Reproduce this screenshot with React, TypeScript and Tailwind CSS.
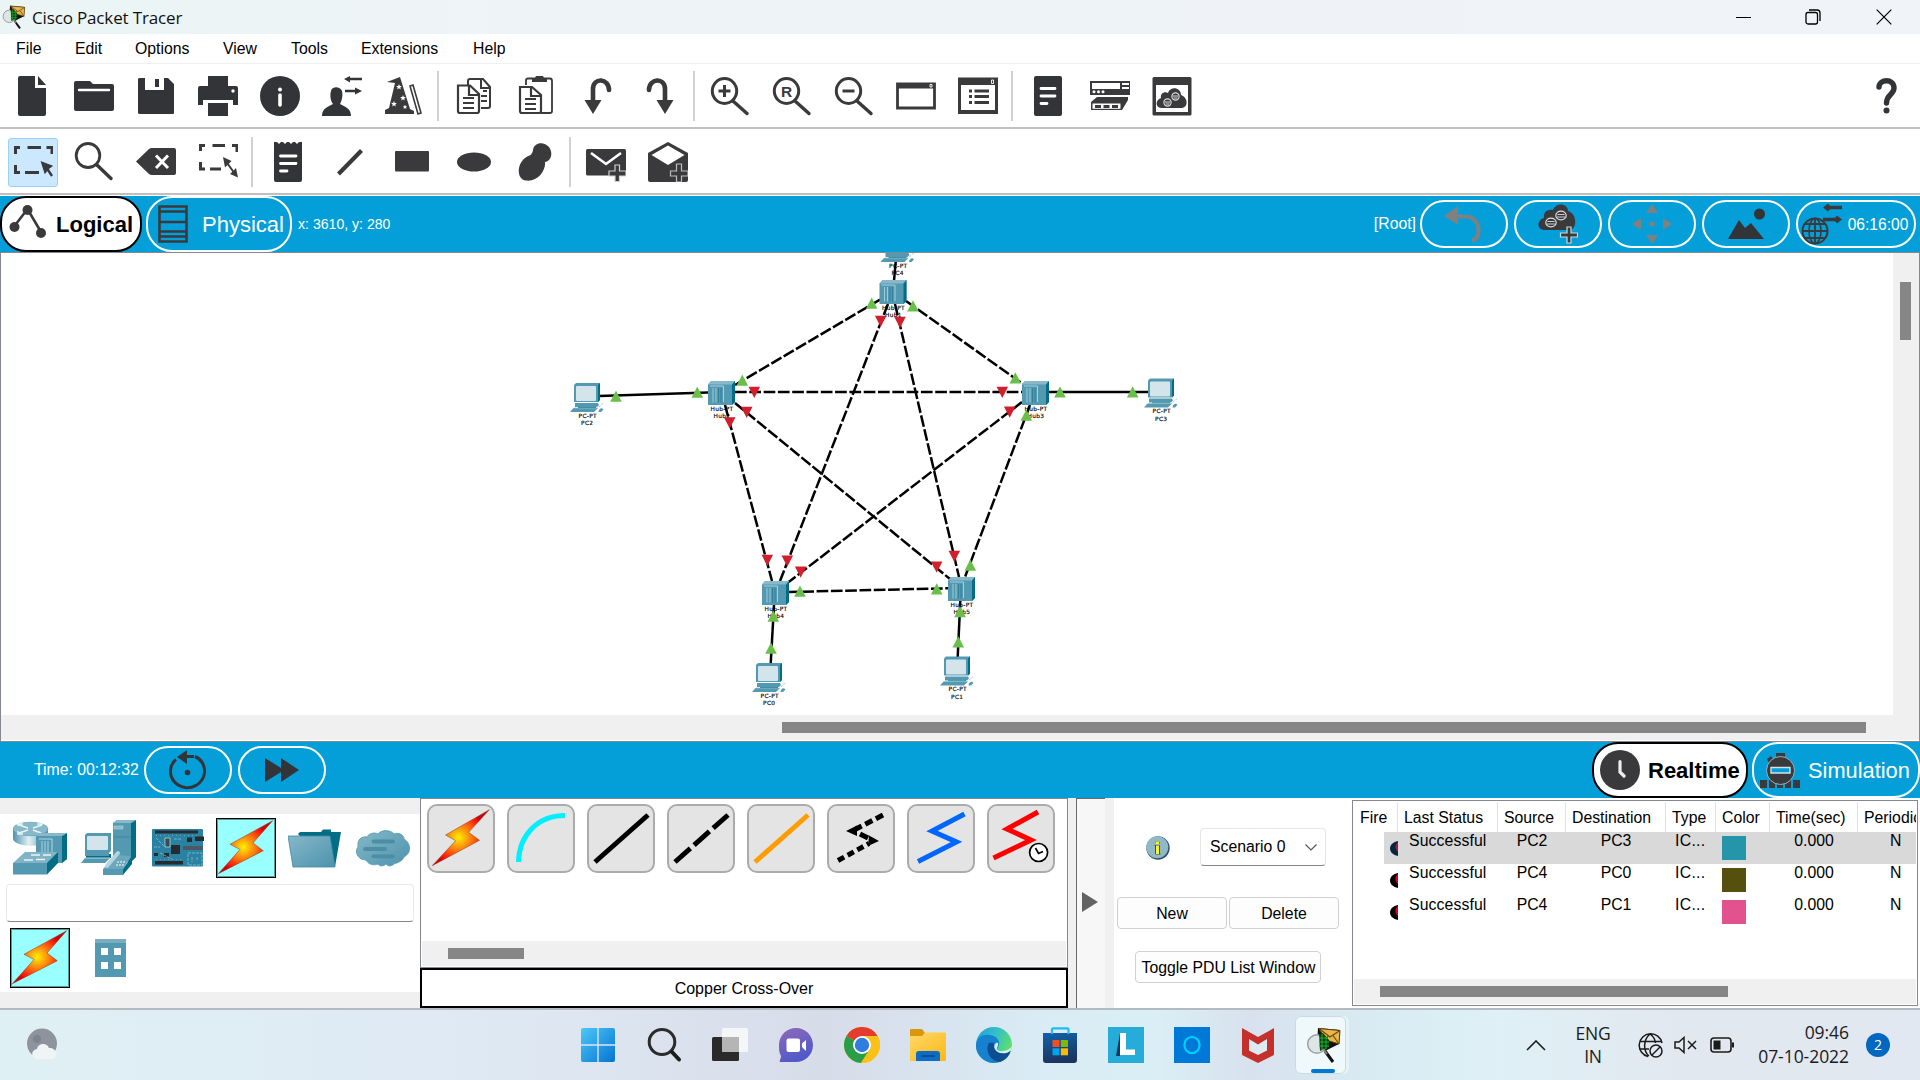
import React from "react";

type Pt = [number, number];

const D = "#333438";
const G = "#3a3a3c";
const BLUE = "#049fd9";

/* ---------- generic ---------- */

function Ico({ children, size = 40, className = "" }: { children: React.ReactNode; size?: number; className?: string }) {
  return (
    <svg width={size} height={size} viewBox={`0 0 ${size} ${size}`} className={`block shrink-0 ${className}`} fill="none">
      {children}
    </svg>
  );
}

function ToolCell({ children }: { children: React.ReactNode }) {
  return <div className="flex w-[62px] shrink-0 items-center justify-center">{children}</div>;
}

function Sep() {
  return (
    <div className="flex w-2 shrink-0 justify-start self-center pl-[2px]">
      <div className="h-[50px] w-0.5 bg-[#d0d0d0]" />
    </div>
  );
}

function PacketTracerLogo({ w, h }: { w: number; h: number }) {
  return (
    <svg width={w} height={h} viewBox="0 0 34 36" className="block shrink-0" fill="none">
      <path d="M11 1 L33 3 L32 17 L18 24 L10 18z" fill="#111" />
      <path d="M12 1.500 L33 3.500 L32 17 L19 13z" fill="#e8b64c" stroke="#5a3d08" strokeWidth="1" />
      <path d="M12 1.500 L23 10 L33 3.500 M19 13 L21 9 M32 17 L26 8.500" stroke="#6b4a10" strokeWidth="1.200" />
      <circle cx="10" cy="17" r="9.300" fill="#dfe5e4" stroke="#9aa3a3" strokeWidth="1.500" />
      <path d="M12 7 L16 6 L22 13 V20 L13 24z" fill="#0b3d12" />
      <path d="M12 11 h9 M12 15 h10 M12 19 h10 M15 7 v16 M19 10 v12" stroke="#17b52c" strokeWidth="1" />
      <path d="M18 24 L26 35" stroke="#111" strokeWidth="3" />
      <path d="M16 22 L20 27" stroke="#888" strokeWidth="2" />
    </svg>
  );
}

/* ---------- toolbar icons ---------- */

const Magnifier = ({ children }: { children?: React.ReactNode }) => (
  <Ico>
    <ellipse cx="14.5" cy="15" rx="12.2" ry="12.4" stroke={G} strokeWidth="3" />
    <path d="M23 25 L37 37.5" stroke={G} strokeWidth="3.4" strokeLinecap="round" />
    {children}
  </Ico>
);

const Star = ({ x, y, r }: { x: number; y: number; r: number }) => (
  <path
    transform={`translate(${x} ${y}) scale(${r})`}
    d="M0 -1 L0.270 -0.360 L0.950 -0.310 L0.430 0.140 L0.590 0.810 L0 0.450 L-0.590 0.810 L-0.430 0.140 L-0.950 -0.310 L-0.270 -0.360z"
    fill="#fff"
  />
);

const mainTools: (React.ReactNode | null)[] = [
  <Ico><path d="M8 0 H23 V12 H34 V38 Q34 40 32 40 H8 Q6 40 6 38 V2 Q6 0 8 0z M26 0 L34 9 H26z" fill={D} /></Ico>,
  <Ico><path d="M0 7 Q0 5 2 5 H16 L19 8 H38 Q40 8 40 10 V33 Q40 35 38 35 H2 Q0 35 0 33z" fill={D} /><path d="M5 14 H35" stroke="#fff" strokeWidth="2.4" strokeLinecap="round" /></Ico>,
  <Ico><path d="M4 2 H9 V14 H28 V2 H32 L38 8 V37 Q38 38 37 38 H4 Q2 38 2 37 V3 Q2 2 4 2z" fill={D} /><path d="M19 3 H23 V11 H19z" fill={D} /></Ico>,
  <Ico><path d="M10 0 H30 V10 H38 Q40 10 40 12 V29 H35 V24 H5 V29 H0 V12 Q0 10 2 10 H10z M10 27 H30 V40 H10z" fill={D} /><circle cx="35" cy="15" r="1.7" fill="#fff" /></Ico>,
  <Ico><circle cx="20" cy="20" r="20" fill={D} /><circle cx="20" cy="13.5" r="2" fill="#fff" /><path d="M20 19 V29" stroke="#fff" strokeWidth="3.6" strokeLinecap="round" /></Ico>,
  <Ico><path d="M0 40 C0 32 6 31 11 28 C8 24 8 18 9 15 C10 10 18 10 20 15 C21 19 20 25 18 28 C23 31 29 32 29 40z" fill={D} /><path d="M25 3 H40 M23 15 H37" stroke={D} strokeWidth="2.6" /><path d="M22 3 L28 0 V6.500z M40 15 L33 11.500 V18.500z" fill={D} /></Ico>,
  <Ico><path d="M3 6 L16 1 L26 33 L30 35 V38 H1 V34 L5 32 L11 7z" fill={G} /><Star x={15} y={11} r={3} /><Star x={19} y={22} r={3} /><Star x={10} y={28} r={3} /><Star x={21} y={31} r={2.400} /><path d="M26 10 L29 9 L37 37 L34 38z" stroke={G} strokeWidth="1.600" fill="#fff" /></Ico>,
  null,
  <Ico><path d="M14 12 V5 Q14 3 16 3 H29 L36 11 V30 Q36 32 34 32 H27 M27 3 V12 H36 M27 20 H33 M27 25 H33 M29 15 H33" stroke={G} strokeWidth="2" /><path d="M4 9.500 H16 L25 18 V35 Q25 37 23 37 H6 Q4 37 4 35z" fill="#fff" stroke={G} strokeWidth="2.2" /><path d="M15 9 V19 H25 M9 22 H20 M9 27 H20 M9 32 H20" stroke={G} strokeWidth="2.2" /></Ico>,
  <Ico><path d="M10 9 V4 Q10 2.500 12 2.500 H34 Q36 2.500 36 5 V35 Q36 37 34 37 H25" stroke={G} strokeWidth="1.8" /><path d="M16 2 H19 L20 0 H27 L28 2 H31 V6 H16z" fill={G} /><path d="M4 11 H16 L25 19 V35 Q25 37 23 37 H6 Q4 37 4 35z" fill="#fff" stroke={G} strokeWidth="2.2" /><path d="M15 11 V20 H25 M9 23 H20 M9 28 H20 M9 33 H20" stroke={G} strokeWidth="2.200" /></Ico>,
  <Ico><path d="M31 14 C31 2 15 1 15 13 V26" stroke={G} strokeWidth="4.600" strokeLinecap="round" /><path d="M6.500 24 H23.500 L15 38z" fill={G} /></Ico>,
  <Ico><path d="M9 14 C9 2 25 1 25 13 V26" stroke={G} strokeWidth="4.600" strokeLinecap="round" /><path d="M16.500 24 H33.500 L25 38z" fill={G} /></Ico>,
  null,
  <Magnifier><path d="M14.500 9 V21 M8.500 15 H20.500" stroke={G} strokeWidth="3" /></Magnifier>,
  <Magnifier><text x="14.500" y="20.600" textAnchor="middle" fontSize="15.500" fontWeight="700" fontFamily="Liberation Sans, sans-serif" fill={G}>R</text></Magnifier>,
  <Magnifier><path d="M8.500 15 H20.500" stroke={G} strokeWidth="3" /></Magnifier>,
  <Ico><path d="M1.500 8 H38.500 V32 H1.500z" stroke={G} strokeWidth="2.800" /><path d="M1 7 H39 V12.500 H1z" fill={G} /><path d="M34 8.500 H36 V11 H34z" stroke="#fff" strokeWidth="0.900" /></Ico>,
  <Ico><path d="M1.500 3 H38.500 V36.500 H1.500z" stroke={G} strokeWidth="3" /><path d="M1 2 H39 V9 H1z M1 34 H39 V37.500 H1z" fill={G} /><path d="M33.500 4 H35.500 V7.500 H33.500z" stroke="#fff" strokeWidth="0.900" /><path d="M11 15 H14 M11 20.500 H14 M11 26.500 H14 M16.500 15 H31 M16.500 20.500 H31 M16.500 26.500 H31" stroke={G} strokeWidth="2.800" /></Ico>,
  null,
  <Ico><rect x="6" width="28" height="40" rx="2" fill={D} /><path d="M13 12.500 H27 M13 20 H27 M13 27.500 H19" stroke="#fff" strokeWidth="2.800" strokeLinecap="round" /></Ico>,
  <Ico><path d="M0 5 H40 V19 H0z" fill={G} /><path d="M2 7 H30 V13 H2z M32 7 H39 V9 H32z M32 11 H39 V13 H32z" fill="#fff" /><g fill="#fff"><circle cx="4" cy="15.800" r="1.500" /><circle cx="8.500" cy="15.800" r="1.500" /><circle cx="13" cy="15.800" r="1.500" /></g><path d="M7 21 H38 V24 L32 34 H1 V26z" fill={G} /><path d="M2.500 27.500 H30.500 V32.800 H2.500z" fill="#fff" /><path d="M5 29 H11 V32 H5z M13.500 29 H19.500 V32 H13.500z M22 29 H28 V32 H22z" fill={G} /></Ico>,
  <Ico><rect x="0.500" y="1" width="39" height="38.500" rx="1.500" fill={G} /><path d="M4 9 H36 V36 H4z" fill="#fff" /><path d="M10 32 C3 32 3 24 9 22 C8 17 13 15 16 17 C18 10 29 11 29 19 C36 21 37 32 29 32z" fill={G} /><circle cx="15.500" cy="26.500" r="3.600" stroke="#ddd" strokeWidth="1.200" /><circle cx="23.500" cy="20.500" r="3.600" stroke="#ddd" strokeWidth="1.200" /><path d="M13 26 H18 M13.500 28 H17.500 M21 20 H26 M21.500 22 H25.500" stroke="#ddd" strokeWidth="1" /></Ico>,
];

const selectPath = "M2.500 12 V5.500 H7 M14.500 5.500 H28 M33.500 5.500 H39 V12 M2.500 23 V30.500 H7 M12 30.500 H26";

const drawTools: (React.ReactNode | null)[] = [
  <Ico><path d={selectPath} stroke={G} strokeWidth="3" /><path d="M28.500 20 L39 24 L35.500 26.500 L32 31z" fill={G} stroke={G} strokeWidth="1.200" /><path d="M33 25 L39 34" stroke={G} strokeWidth="2.400" /></Ico>,
  <Ico><ellipse cx="14" cy="13.500" rx="11.800" ry="12" stroke={G} strokeWidth="2.800" /><path d="M23 23 L37 36.500" stroke={G} strokeWidth="3.400" strokeLinecap="round" /></Ico>,
  <Ico><path d="M0 19.500 L13 7 Q14 6 16 6 H38 Q40 6 40 8 V31 Q40 33 38 33 H16 Q14 33 13 32z" fill={G} /><path d="M20 13.500 L32 26 M32 13.500 L20 26" stroke="#fff" strokeWidth="3" /></Ico>,
  <Ico><path d="M2.500 9 V3.500 H7 M14.500 3.500 H27 M34 3.500 H39 V10 M2.500 20 V27 H7 M12 27 H23" stroke={G} strokeWidth="3" /><path d="M27 18 L37 32" stroke={G} strokeWidth="2" /><path d="M25 15 L33.500 19 L27 25.500z M40 35.500 L32 32 L38 26z" fill={G} /></Ico>,
  null,
  <Ico><path d="M6 0 H9 L11 2 L13 0 H15 L17 2 L19 0 H21 L23 2 L25 0 H27 L29 2 L31 0 H34 V38 Q34 40 32 40 H8 Q6 40 6 38z" fill={D} /><path d="M12.500 14 H28 M12.500 21.500 H28 M12.500 29 H19" stroke="#fff" strokeWidth="2.800" strokeLinecap="round" /></Ico>,
  <Ico><path d="M8.500 32 L31.500 8.500" stroke={G} strokeWidth="4.200" /></Ico>,
  <Ico><rect x="3" y="9" width="34" height="20.500" rx="1" fill={G} /></Ico>,
  <Ico><ellipse cx="20" cy="20" rx="17" ry="9.600" fill={G} /></Ico>,
  <Ico><path d="M17 8 C18 0 28 -1 33 5 C38 12 34 20 29 20 C30 28 22 40 10 38.500 C0 37 1 22 9 16 C13 13 16 14 17 8z" fill={G} /></Ico>,
  null,
  <Ico><rect y="7" width="40" height="26.500" rx="1.500" fill={G} /><path d="M5 11 L20 22 L35 11" stroke="#fff" strokeWidth="2.600" /><path d="M29 23 H33.500 V29 H40 V34 H33.500 V39.500 H29 V34 H23 V29 H29z" fill={G} stroke="#cfcfcf" strokeWidth="1.200" /></Ico>,
  <Ico><path d="M0 11 L20 0 L40 11 V38 Q40 40 38 40 H2 Q0 40 0 38z" fill={G} /><path d="M3.500 13 L20 3.500 L36.500 13 L20 23z" fill="#fff" /><path d="M28.500 22 H33.500 V29 H40 V34 H33.500 V40 H28.500 V34 H22.500 V29 H28.500z" fill={G} stroke="#bdbdbd" strokeWidth="1.200" /></Ico>,
];

/* ---------- topology ---------- */

type Link = { a: Pt; b: Pt; dashed?: boolean };

const links: Link[] = [
  { a: [880, 299.6], b: [735, 385], dashed: true },
  { a: [906, 301], b: [1023, 384], dashed: true },
  { a: [735, 392], b: [1022, 392], dashed: true },
  { a: [888, 304], b: [780, 581], dashed: true },
  { a: [895, 304], b: [959, 577], dashed: true },
  { a: [725, 405], b: [772, 581], dashed: true },
  { a: [735, 403], b: [950, 579], dashed: true },
  { a: [1022, 402], b: [788.7, 582], dashed: true },
  { a: [1030, 405], b: [965, 577], dashed: true },
  { a: [788, 592], b: [948, 588.3], dashed: true },
  { a: [599, 396], b: [708, 392.5] },
  { a: [1049, 392], b: [1150, 392] },
  { a: [895.7, 262], b: [894, 281] },
  { a: [774, 605], b: [770.7, 664] },
  { a: [960.3, 601], b: [957.7, 657] },
];

const ups: Pt[] = [
  [616, 391], [697.3, 387], [742.3, 375], [871.7, 298], [913, 300.7], [1015.3, 372.7], [1060, 386.7], [1132.7, 386.7],
  [1026.3, 410], [970.3, 560], [936.7, 583.7], [800, 586], [773.3, 611], [771, 643], [960, 606.5], [958.3, 636.7],
];
const downs: Pt[] = [
  [754.3, 387], [746.7, 407], [729.7, 417.5], [880.7, 316], [900, 317], [1002.3, 387], [1009.7, 406.7],
  [767.3, 555], [787.3, 555.7], [800.7, 566.7], [954.3, 551], [936.7, 561.7],
];

const hubs: { at: Pt; name: string }[] = [
  { at: [708, 381], name: "Hub2" },
  { at: [879.5, 280], name: "Hub1" },
  { at: [1022, 381], name: "Hub3" },
  { at: [762, 581], name: "Hub4" },
  { at: [948, 577], name: "Hub5" },
];
const pcs: { at: Pt; name: string }[] = [
  { at: [570, 383], name: "PC2" },
  { at: [1144, 378.5], name: "PC3" },
  { at: [880.5, 233], name: "PC4" },
  { at: [752, 663], name: "PC0" },
  { at: [940, 656.5], name: "PC1" },
];

function HubGlyph() {
  return (
    <g>
      <path d="M0 3.500 L3 0 H27 V21 L24 24 H0z" fill="#5399b2" />
      <path d="M0 3.500 L3 0 H27 L24 3.500z" fill="#88b9ca" />
      <path d="M24 3.500 L27 0 V21 L24 24z" fill="#046d86" />
      <path d="M2 5 H15.500 V21" stroke="#a8cfdc" strokeWidth="1" fill="none" />
      <path d="M5 7 V21.500 M8 7 V21.500" stroke="#a8cfdc" strokeWidth="0.900" />
      <path d="M10.500 7 V21.500 M13 7 V21.500" stroke="#2f7c96" strokeWidth="0.900" />
    </g>
  );
}

function PcGlyph() {
  return (
    <g>
      <path d="M4 2 L6 0 H30 V17 L28 19 H4z" fill="#5399b2" />
      <path d="M28 2 L30 0 V17 L28 19z" fill="#046d86" />
      <rect x="6" y="3" width="20" height="15" rx="1" fill="#d3e4ea" />
      <path d="M5 20 H28 L29 22 L27 24 H5z" fill="#5399b2" />
      <path d="M8 24 H26 V25.500 H8z" fill="#046d86" />
      <path d="M3.500 25 H28 L24 29 H0z" fill="#5399b2" />
      <path d="M4 25 H28" stroke="#9cc5d3" strokeWidth="0.800" />
      <path d="M29 27 Q31 24 33.500 26.500 L31 29 H28.500z" fill="#5399b2" />
      <path d="M29 24 Q32 19.500 34.500 21" stroke="#8fbccb" strokeWidth="0.800" strokeDasharray="2 1.500" fill="none" />
    </g>
  );
}

function Topology() {
  return (
    <svg width="1892" height="462" viewBox="1 253 1892 462" className="block">
      <g fontFamily="DejaVu Sans, sans-serif" fontSize="5.800" letterSpacing="0.350" textAnchor="middle" fill="#000" stroke="#000" strokeWidth="0.150">
        {hubs.map(({ at: [x, y], name }) => (
          <g key={name}>
            <text x={x + 14} y={y + 30}>Hub-PT</text>
            <text x={x + 14} y={y + 36.700}>{name}</text>
          </g>
        ))}
        {pcs.map(({ at: [x, y], name }) => (
          <g key={name}>
            <text x={x + 17.800} y={y + 34.800}>PC-PT</text>
            <text x={x + 17.200} y={y + 42}>{name}</text>
          </g>
        ))}
      </g>
      <g stroke="#000" strokeWidth="2.500">
        {links.map((l, i) => (
          <line key={i} x1={l.a[0]} y1={l.a[1]} x2={l.b[0]} y2={l.b[1]} strokeDasharray={l.dashed ? "11.7 2.6" : undefined} />
        ))}
      </g>
      {hubs.map(({ at: [x, y], name }) => (
        <g key={name} transform={`translate(${x} ${y})`}><HubGlyph /></g>
      ))}
      {pcs.map(({ at: [x, y], name }) => (
        <g key={name} transform={`translate(${x} ${y})`}><PcGlyph /></g>
      ))}
      {ups.map(([x, y], i) => <path key={i} d={`M${x} ${y - 0.500} l5.800 11.300 h-11.600z`} fill="#6abf4b" />)}
      {downs.map(([x, y], i) => <path key={i} d={`M${x} ${y + 11} l5.800 -11.300 h-11.600z`} fill="#d0202e" />)}
    </svg>
  );
}

/* ---------- device palette ---------- */

function Bolt({ d }: { d: string }) {
  return <path d={d} fill="url(#bolt)" stroke="#7a3c1a" strokeWidth="0.500" />;
}

function BoltTile() {
  return (
    <div className="h-[60px] w-[60px] border border-black bg-[#99ffff]">
      <svg width="58" height="58" viewBox="1 1 58 58" className="block">
        <path d="M1.500 1.500 H58.500 V58.500 H1.500z" fill="none" stroke="#3b6f6f" strokeWidth="0.700" />
        <Bolt d="M56.700 2.700 L14 26.300 L24 31.500 L2.300 55.700 L47.300 32.700 L37 25z" />
      </svg>
    </div>
  );
}

const NetworkIcon = () => (
  <Ico size={54}>
    <path d="M0 8 V18 C2 27 33 27 35 18 V8z" fill="url(#steel)" />
    <ellipse cx="17.500" cy="8" rx="17.500" ry="6.800" fill="#88b9ca" stroke="#5399b2" strokeWidth="0.600" />
    <path d="M6 4 L15 7 M10 3 H5 V5 M29 4 L20 7 M24 3 H30 M6 12 L15 9 M5 10 V13 H10 M28 12 L20 9" stroke="#e9f3f6" strokeWidth="1.500" />
    <path d="M23 15 L27 12 H54 V38 L49 42 H23z" fill="#5399b2" /><path d="M49 15 L54 12 V38 L49 42z" fill="#046d86" />
    <path d="M23 15 L27 12 H54 L49 15z" fill="#88b9ca" />
    <path d="M26 18 H39 V31 M29 20 V32 M32 20 V32 M35 20 V32" stroke="#b4d4df" strokeWidth="1" />
    <path d="M0 42 L12 31 H45 L34 42z" fill="#7fb3c5" /><path d="M0 42 H34 V53.500 H0z" fill="#5399b2" /><path d="M34 42 L45 31 V42 L34 53.500z" fill="#046d86" />
    <path d="M18 34 H27 M30 34 H38 M11 39 H20 M23 38.500 H32" stroke="#e9f3f6" strokeWidth="1.400" />
  </Ico>
);

const EndDevicesIcon = () => (
  <Ico size={56}>
    <path d="M32 3 L36 0 H55 V37 L50 42 H32z" fill="#5399b2" /><path d="M50 3 L55 0 V37 L50 42z" fill="#046d86" /><path d="M32 3 L36 0 H55 L50 3z" fill="#88b9ca" />
    <path d="M33 6 H42 V9 H33z" fill="#88b9ca" stroke="#b4d4df" strokeWidth="0.600" /><path d="M32 17 H50" stroke="#3f8299" strokeWidth="0.800" />
    <path d="M4 15 L6 13 H30 V31 L28 33 H4z" fill="#5399b2" /><rect x="6" y="16" width="21" height="14" rx="1" fill="#d3e4ea" />
    <path d="M5 34 H30 V38 H5z" fill="#046d86" /><path d="M4 33 H28 V36 H4z" fill="#5399b2" /><path d="M4 38 H29 L24 43 H0z" fill="#5399b2" /><path d="M4 38 H29" stroke="#b4d4df" />
    <path d="M22 49 L35 35 L50 36 L42 49z" fill="#6ba8bd" /><path d="M22 49 H42 V55 H22z" fill="#5399b2" /><path d="M42 49 L51 36 V44 L42 55z" fill="#046d86" />
    <path d="M26 46 L37 33" stroke="#b4d4df" strokeWidth="4" strokeLinecap="round" /><path d="M36 42 H45 M35 45 H43" stroke="#c9e0e8" strokeWidth="1.500" strokeDasharray="2 1" />
  </Ico>
);

const BoardIcon = () => (
  <svg width="52" height="38" viewBox="0 0 52 38" className="ml-[2px] block">
    <rect width="51" height="37.500" rx="1" fill="#2a81a1" />
    <path d="M3 1.500 H46 V4.500 H3z M3 32 H31 V35.500 H3z M19 16 H28 V25 H19z M35 8.500 H40 V13 H35z M43 7.500 H52 V12 H43z M2 24 H6 V27 H2z M12 24 H17 V28 H12z" fill="#262b30" />
    <path d="M31 17 H51 V21 H31z" fill="#4c5960" />
    <path d="M13 9 H18 V18 H13z" fill="#3d4a50" stroke="#cfe" strokeWidth="0.600" />
    <path d="M4 9 L13 18 M22 10 H30 M2 18 H8 M8 24 L20 30 M36 24 H50 V36 H36z M40 28 V33 M45 28 V32" stroke="#8cc9df" strokeWidth="0.700" fill="none" strokeDasharray="3 1" />
    <path d="M4 6.500 H46 M4 30.500 H31" stroke="#7cc3dc" strokeWidth="0.600" strokeDasharray="1 3" />
  </svg>
);

const FolderIcon = () => (
  <svg width="54" height="39" viewBox="0 0 54 39" className="ml-[2px] block">
    <path d="M10 5 L12 3 H33 L35 0.500 H43 V3 H53 L47 38 H40z" fill="#046d86" />
    <path d="M0 7 H42 L47 38 H5z" fill="url(#steelDiag)" stroke="#3f8ba5" strokeWidth="0.800" />
  </svg>
);

const CloudIcon = () => (
  <svg width="54" height="37" viewBox="0 0 54 37" className="block">
    <path d="M10 30 C2 30 -2 22 2 17 C1 10 5 6 11 7 C13 3 19 2 22 4 C26 -1 35 0 38 4 C43 2 48 5 48 9 C55 13 56 23 48 27 C46 32 40 33 38 34 C35 37 31 36 30 34 C27 37 23 36 22 34 C17 36 12 34 10 30z" fill="url(#steelDiag)" stroke="#5399b2" strokeWidth="0.800" />
    <path d="M17.500 11.500 H37 M9 19 H29 M17.500 26.300 H37" stroke="#4d8ea6" strokeWidth="3.800" strokeLinecap="round" />
  </svg>
);

function Palette() {
  return (
    <div className="flex h-[210px] w-[420px] shrink-0 flex-col bg-[#f0f0f0] py-4">
      <div className="flex h-[178px] flex-col bg-white">
        <div className="flex h-[70px] pt-1 pl-[6px]">
          {[<NetworkIcon />, <EndDevicesIcon />, <BoardIcon />, <BoltTile />, <FolderIcon />, <CloudIcon />].map((el, i) => (
            <div key={i} className="flex h-[60px] w-[68.5px] items-center justify-center">{el}</div>
          ))}
        </div>
        <div className="mx-[6px] h-[38px] rounded-sm border border-[#e8e8e8] border-b-[#868686] bg-white" />
        <div className="flex items-center pt-[6px] pl-[10px]">
          <BoltTile />
          <svg width="31" height="38" viewBox="0 0 31 38" className="ml-[25px] block">
            <rect width="31" height="38" fill="#5399b2" />
            <path d="M0 0 H31 V4 H0z" fill="#79aec1" />
            <path d="M6 9 H13 V16 H6z M19 9 H26 V16 H19z M6 23 H13 V30 H6z M19 23 H26 V30 H19z" fill="#fff" />
          </svg>
        </div>
      </div>
    </div>
  );
}

const cables: React.ReactNode[] = [
  <Bolt d="M62.400 5.700 L18.600 31 L28.600 36.700 L5.200 61.700 L52.500 36.300 L41.600 28.300z" />,
  <path d="M11.500 58 C12 32 30 11.500 58 11.500" stroke="#00f0ff" strokeWidth="5" />,
  <path d="M8 58 L61 11" stroke="#000" strokeWidth="5" />,
  <path d="M8 58 L61 11" stroke="#000" strokeWidth="5" strokeDasharray="20.500 5" />,
  <path d="M8 58 L61 11" stroke="#ff9c00" strokeWidth="5" />,
  <><path d="M56 11 L28 25.500" stroke="#000" strokeWidth="5" strokeDasharray="8 4" /><path d="M33 30 L41 34" stroke="#000" strokeWidth="5" /><path d="M11 56.500 L42 39.500" stroke="#000" strokeWidth="5" strokeDasharray="7 4" /><path d="M19 27 L30 21.500 V32z M52 37 L42 31.500 L41 42z" fill="#000" /></>,
  <path d="M57.500 10 L25 27 L49.500 38 L11 57.500" stroke="#0066ff" strokeWidth="5" />,
  <><path d="M51 8 L20 25 L44 36 L6.500 54" stroke="#ff0000" strokeWidth="5" /><circle cx="51.600" cy="48.500" r="9" fill="#fff" stroke="#000" strokeWidth="1.700" /><path d="M48.500 44 L51.500 49.500 L56 47.500" stroke="#000" strokeWidth="1.700" /></>,
];

function CablePanel() {
  return (
    <div className="flex h-[210px] w-[648px] shrink-0 flex-col">
      <div className="flex h-[170px] flex-col border border-[#828790] bg-white p-px">
        <div className="flex h-[141px] gap-3 pt-1 pl-[5px]">
          {cables.map((c, i) => (
            <div key={i} className="h-[69px] w-[68px] shrink-0 rounded-[10px] border-2 border-[#ababab] bg-[#e4e4e4]">
              <svg width="64" height="65" viewBox="2 2 64 65" className="block" fill="none">{c}</svg>
            </div>
          ))}
        </div>
        <div className="h-[25px] bg-[#f0f0f0] pt-[7px] pl-[26px]">
          <div className="h-[11px] w-[76px] bg-[#868686]" />
        </div>
      </div>
      <div className="flex h-10 items-center justify-center border-2 border-black bg-white pt-[2px] text-[16px] leading-none">Copper Cross-Over</div>
    </div>
  );
}

function Splitter() {
  return (
    <div className="flex w-[46px] shrink-0 bg-[#f0f0f0] pl-2">
      <div className="flex w-[29px] items-center border-t border-l border-[#6a6a6a] bg-[#f7f7f7] pb-1 pl-[5px]">
        <svg width="16" height="20" viewBox="0 0 16 20"><path d="M0 0 L16 10 L0 20z" fill="#636363" /></svg>
      </div>
    </div>
  );
}

function ScenarioPanel() {
  const btn = "flex items-center justify-center rounded-[4px] border border-[#d0d0d0] bg-[#fdfdfd] pt-[2px] text-[15.8px] leading-none";
  return (
    <div className="flex w-[238px] shrink-0 flex-col bg-white">
      <div className="flex h-[38px] items-center mt-[30px] pl-8">
        <svg width="24" height="24" viewBox="0 0 24 24" className="mt-[2px] block">
          <circle cx="12" cy="12" r="11.700" fill="#2d5260" /><circle cx="11.300" cy="11.300" r="11" fill="#8fb9c6" />
          <path d="M8.500 9.500 H13.500 V18 M9.500 6 H13 V8 M9.500 10 V18 H14.500" stroke="#55550a" strokeWidth="1" fill="none" />
          <path d="M10 5.500 H13 V8 H10z M10 9.500 H13 V18 H10z" fill="#fdf32c" />
        </svg>
        <div className="ml-[30px] flex h-[38px] w-[126px] items-center justify-between rounded-sm border border-[#e6e6e6] border-b-[#868686] bg-white pr-[8px] pl-[9px] text-[15.8px] leading-none">
          <span className="whitespace-nowrap">Scenario 0</span>
          <svg width="12" height="7" viewBox="0 0 12 7" fill="none"><path d="M0.500 0.500 L6 6 L11.500 0.500" stroke="#555" strokeWidth="1.200" /></svg>
        </div>
      </div>
      <div className="mt-[31px] flex gap-[2px] pl-[3px]">
        <div className={`${btn} h-8 w-[110px]`}>New</div>
        <div className={`${btn} h-8 w-[110px]`}>Delete</div>
      </div>
      <div className={`${btn} mt-[22px] ml-[21px] h-8 w-[186px]`}>
        <span className="block w-[173px] whitespace-nowrap leading-5">Toggle PDU List Window</span>
      </div>
    </div>
  );
}

const rows = [
  { src: "PC2", dst: "PC3", sw: "bg-[#2596aa]", sel: true },
  { src: "PC4", dst: "PC0", sw: "bg-[#55500e]", sel: false },
  { src: "PC4", dst: "PC1", sw: "bg-[#e2528e]", sel: false },
];

function PduTable() {
  const th = "flex h-full shrink-0 items-center overflow-hidden border-r border-[#e2e2e2] pt-[2px] pl-[6px] whitespace-nowrap";
  return (
    <div className="mt-[2px] flex h-[206px] w-[566px] shrink-0 flex-col border border-[#828790] bg-white p-px text-[15.8px]">
      <div className="flex h-[30px] leading-[18px]">
        <div className={`${th} w-[44px]`}>Fire</div>
        <div className={`${th} w-[100px]`}>Last Status</div>
        <div className={`${th} w-[68px]`}>Source</div>
        <div className={`${th} w-[100px]`}>Destination</div>
        <div className={`${th} w-[50px]`}>Type</div>
        <div className={`${th} w-[54px]`}>Color</div>
        <div className={`${th} w-[88px]`}>Time(sec)</div>
        <div className="flex h-full w-[58px] shrink-0 items-center overflow-hidden pt-[2px] pl-[6px] whitespace-nowrap">Periodic</div>
      </div>
      <div className="flex h-[147px] flex-col">
        {rows.map((r, i) => (
          <div key={i} className={`ml-[30px] flex h-8 ${r.sel ? "bg-[#d9d9d9]" : ""}`}>
            <div className="w-[14px] shrink-0 pt-[9px] pl-[6px]">
              <svg width="8" height="15" viewBox="0 0 8 15" className="block"><path d="M8 0 C3 1 0 4 0 7.500 C0 11 3 14 8 15z" fill={r.sel ? "#06253f" : "#000"} /><path d="M8 1 C4 4 5 9 8 11z" fill={r.sel ? "#a01a40" : "#e00010"} /></svg>
            </div>
            <div className="w-[100px] shrink-0 pl-[11px] leading-[18px] tracking-[0.100px]">Successful</div>
            <div className="w-[68px] shrink-0 text-center leading-[18px]">{r.src}</div>
            <div className="w-[100px] shrink-0 text-center leading-[18px]">{r.dst}</div>
            <div className="w-[50px] shrink-0 pl-[9px] leading-[18px] tracking-[0.300px]">IC...</div>
            <div className="w-[54px] shrink-0 pt-1 pl-[6px]"><div className={`h-6 w-6 ${r.sw}`} /></div>
            <div className="w-[88px] shrink-0 text-center leading-[18px]">0.000</div>
            <div className="w-[58px] shrink-0 pl-[32px] leading-[18px]">N</div>
          </div>
        ))}
      </div>
      <div className="h-[25px] bg-[#f0f0f0] pt-[7px] pl-[26px]"><div className="h-[11px] w-[348px] bg-[#868686]" /></div>
    </div>
  );
}

/* ---------- blue bars ---------- */

function Pill({ children, className = "" }: { children?: React.ReactNode; className?: string }) {
  return <div className={`flex h-12 shrink-0 items-center justify-center rounded-[24px] border-2 border-white ${className}`}>{children}</div>;
}

const Coil = ({ x, y }: { x: number; y: number }) => (
  <g stroke="#ddd" strokeWidth="1.200"><ellipse cx={x} cy={y} rx="5.200" ry="4.400" /><path d={`M${x - 3.500} ${y - 1} H${x + 3.500} M${x - 4} ${y + 1.500} H${x + 4}`} strokeWidth="0.900" /></g>
);

function ViewBar() {
  return (
    <div className="flex h-14 shrink-0 items-center bg-[#049fd9] text-white">
      <div className="flex h-14 w-[142px] items-center rounded-[26px] border-2 border-black bg-white pl-[7px] text-black">
        <svg width="38" height="36" viewBox="0 0 38 36" className="-mt-1 block shrink-0">
          <path d="M5.500 22 L18.500 5 L32 28" stroke={G} strokeWidth="2.600" fill="none" /><circle cx="18.500" cy="6" r="5" fill={G} /><circle cx="5.500" cy="23" r="5" fill={G} /><circle cx="32" cy="29" r="5" fill={G} />
        </svg>
        <span className="ml-[9px] pt-px text-[22px] font-bold leading-none">Logical</span>
      </div>
      <div className="ml-[4px] flex h-14 w-[146px] items-center rounded-[26px] border-2 border-white pl-[10px]">
        <svg width="30" height="38" viewBox="0 0 30 38" className="block shrink-0"><path d="M1.500 1.500 H28.500 V36.500 H1.500z M1.500 6.500 H28.500 M1.500 17 H28.500 M1.500 26.500 H28.500 M1.500 31.500 H28.500" stroke={G} strokeWidth="2.600" fill="none" /></svg>
        <span className="ml-[14px] pt-px text-[22px] leading-none">Physical</span>
      </div>
      <span className="ml-[6px] pt-px text-[14.100px] leading-none">x: 3610, y: 280</span>
      <div className="ml-auto flex items-center gap-[6px] pr-1">
        <span className="-mr-[2px] text-[15.800px] leading-none">[Root]</span>
        <Pill className="w-[88px]"><Ico><path d="M10 12.500 H22 C37 12.500 38 36 28 36" stroke="#808080" strokeWidth="4.200" /><path d="M0 12 L14 2 V21z" fill="#808080" /></Ico></Pill>
        <Pill className="w-[88px]"><Ico><path d="M7 26 C-2 26 -1 16 6 14 C5 7 11 5 15 6 C18 -2 30 -1 30 7 C40 10 39 26 31 26z" fill={G} /><Coil x={13} y={18.500} /><Coil x={23} y={11.500} /><path d="M29 23 H33 V29 H39.500 V33 H33 V39 H29 V33 H22.500 V29 H29z" fill={G} stroke="#cfd8dc" strokeWidth="1.200" /></Ico></Pill>
        <Pill className="w-[88px]"><Ico><path d="M20 0 L26 9 H14z M20 40 L26 31 H14z M0 20 L9 14 V26z M40 20 L31 14 V26z" fill="#808080" /><circle cx="20" cy="20" r="2.700" fill="#808080" /></Ico></Pill>
        <Pill className="w-[88px]"><Ico><path d="M2 35 L13 16 L19 24 L25 19 L38 35z" fill={D} /><circle cx="33.500" cy="10" r="5.500" fill={D} /></Ico></Pill>
        <Pill className="w-[120px]">
          <svg width="42" height="42" viewBox="0 0 42 42" fill="none" className="-ml-[3px] block shrink-0">
            <circle cx="14" cy="28" r="12.500" stroke={G} strokeWidth="2" /><ellipse cx="14" cy="28" rx="6" ry="12.500" stroke={G} strokeWidth="1.600" /><path d="M14 15 V41 M1 28 H27 M3.500 21 H24.500 M3.500 35 H24.500" stroke={G} strokeWidth="1.800" />
            <path d="M26 4.500 H41 M22 16.500 H36" stroke={G} strokeWidth="3.400" /><path d="M22 4.500 L27 0.500 L30 4.500 L27 8.500z M41 16.500 L36 12.500 L33 16.500 L36 20.500z" fill={G} />
          </svg>
          <span className="ml-[5px] pt-px text-[15.600px] leading-none">06:16:00</span>
        </Pill>
      </div>
    </div>
  );
}

function TimeBar() {
  return (
    <div className="flex h-14 shrink-0 items-center bg-[#049fd9] text-white">
      <span className="ml-[34px] w-[110px] text-[15.800px] leading-none whitespace-nowrap">Time: 00:12:32</span>
      <Pill className="w-[88px]"><Ico><path d="M27 6.500 C36 10 38 20 35.500 27 C32 35 24 38.500 17 37.500 C8 36 2 29 2.500 20 C3 15 5 12 8 9.500" stroke={D} strokeWidth="3" /><path d="M19 6.500 H26" stroke={D} strokeWidth="3" /><path d="M9 7 L19 0 V14z" fill={D} /><circle cx="19.500" cy="22.500" r="2.800" fill={D} /></Ico></Pill>
      <Pill className="ml-[6px] w-[88px]"><Ico><path d="M3 8 L19 18 V8 L37 20 L19 32 V22 L3 32z" fill={D} /></Ico></Pill>
      <div className="ml-auto flex">
        <div className="flex h-14 w-[156px] items-center rounded-[26px] border-2 border-black bg-white pl-[6px] text-black">
          <Ico><circle cx="20" cy="20" r="20" fill={G} /><path d="M20 11.500 V22 L24 26" stroke="#eee" strokeWidth="3.200" strokeLinecap="round" /></Ico>
          <span className="ml-[8px] pt-px text-[22px] font-bold leading-none">Realtime</span>
        </div>
        <div className="ml-[4px] flex h-14 w-[168px] items-center rounded-[26px] border-2 border-white pl-[6px]">
          <Ico><path d="M0 30 H7 V38 H0z M9 30 H15 V38 H9z M17 30 H23 V38 H17z M25 30 H31 V38 H25z M33 30 H40 V38 H33z" fill={G} /><path d="M16 3 H25 V8 H16z M7 9 L11 6 L13 9 L9 13z" fill={G} /><circle cx="20.500" cy="20.500" r="14" fill={G} stroke="#8fb6c6" strokeWidth="1" /><path d="M11 17.500 H30 V23 H11z" fill={BLUE} stroke="#cfe3ec" strokeWidth="1.400" /></Ico>
          <span className="ml-[8px] pt-px text-[21.800px] leading-none">Simulation</span>
        </div>
      </div>
    </div>
  );
}

/* ---------- taskbar ---------- */

const apps: React.ReactNode[] = [
  <svg width="36" height="36" viewBox="0 0 36 36"><path d="M1 3 Q1 1 3 1 H17.300 V17.300 H1z M18.700 1 H33 Q35 1 35 3 V17.300 H18.700z M1 18.700 H17.300 V35 H3 Q1 35 1 33z M18.700 18.700 H35 V33 Q35 35 33 35 H18.700z" fill="url(#win)" /></svg>,
  <svg width="36" height="36" viewBox="0 0 36 36" fill="none"><ellipse cx="16" cy="15" rx="12.800" ry="12.500" stroke="#2b2b2b" strokeWidth="3" /><path d="M26 25 L33 32.500" stroke="#1c1c1c" strokeWidth="4" strokeLinecap="round" /></svg>,
  <svg width="36" height="36" viewBox="0 0 36 36"><rect x="0" y="10" width="27" height="24" rx="1.500" fill="#2a2a2a" /><rect x="10" y="1" width="26" height="24" rx="1.500" fill="#f7f7f7" opacity="0.920" /><path d="M10 10 H27 V25 H10z" fill="#a9a9a9" opacity="0.800" /></svg>,
  <svg width="36" height="36" viewBox="0 0 36 36"><path d="M18 1 C27 1 35 8 35 18 C35 28 27 35 18 35 L2 35 C1 34 3 32 3 29 C1 26 1 22 1 18 C1 8 9 1 18 1z" fill="url(#chat)" /><rect x="8.500" y="11.500" width="13.500" height="13.500" rx="2" fill="#fff" /><path d="M24 16.500 L28 13 V24 L24 20z" fill="#fff" /></svg>,
  <svg width="36" height="36" viewBox="0 0 36 36"><circle cx="18" cy="18" r="18" fill="#fbc116" /><path d="M18 18 L2.400 9 A18 18 0 0 1 33.600 9z" fill="#e33b2e" /><path d="M18 18 L2.400 9 A18 18 0 0 0 17 36 L25.800 22.500z" fill="#2a9d48" /><path d="M18 9 H33.600 A18 18 0 0 1 17 36 L25.800 22.500z" fill="#fbc116" /><circle cx="18" cy="18" r="9" fill="#fff" /><circle cx="18" cy="18" r="7.200" fill="#2f7de1" /></svg>,
  <svg width="36" height="36" viewBox="0 0 36 36"><path d="M0 3 Q0 2 1 2 H12 L15 6 V12 H0z" fill="#d9980b" /><path d="M0 9 H12 L15 5.500 H35 Q36 5.500 36 7 V33 Q36 34 35 34 H0z" fill="url(#fold)" /><path d="M6 34 V27 Q6 24 9 24 H27 Q30 24 30 27 V34z" fill="#0f6cc4" /><path d="M11.500 29 H25" stroke="#084c94" strokeWidth="1.700" /></svg>,
  <svg width="36" height="36" viewBox="0 0 36 36"><circle cx="18" cy="18" r="18" fill="url(#edge)" /><path d="M0 18 C1 9 8 7 14 8 C21 9 24 14 23 18 C22 21 20 22 22 24 C26 27 33 25 34.500 23 C32 32 24 36 17 36 C7 35 -0.500 27 0 18z" fill="#1681cf" /><path d="M13 16 C9 22 13 34 24 35 C30 33 34 28 34.500 23.500 C29 27 22 27 19 23 C17 20 19 18 17 15.500z" fill="#0e4d92" /><path d="M19 22 C21 27 30 28 34.800 23.500 L36 19 C33 24 25 25 22 23.500 C19 21 23 20 22 16 C20 15 17 18 19 22z" fill="#d8ecf4" /></svg>,
  <svg width="36" height="36" viewBox="0 0 36 36"><path d="M1 6 H35 V33 Q35 36 32 36 H4 Q1 36 1 33z" fill="url(#store)" /><path d="M10 7 V2.500 Q10 1.300 11.500 1.300 H25 Q26.500 1.300 26.500 2.500 V7" stroke="#22b8f2" strokeWidth="2.200" fill="none" /><path d="M10.500 13 H17.500 V20 H10.500z" fill="#f25022" /><path d="M18.800 13 H26 V20 H18.800z" fill="#7fba00" /><path d="M10.500 21.300 H17.500 V28.300 H10.500z" fill="#00a4ef" /><path d="M18.800 21.300 H26 V28.300 H18.800z" fill="#ffb900" /></svg>,
  <svg width="36" height="36" viewBox="0 0 36 36"><rect width="36" height="36" fill="#27acd9" /><path d="M12 6 L8 29 H12z" fill="#123a63" /><path d="M12 6 H18 V22.500 H27 V28 H12z" fill="#fff" /></svg>,
  <svg width="36" height="36" viewBox="0 0 36 36"><rect width="36" height="36" fill="#0078d7" /><ellipse cx="18" cy="18" rx="7.600" ry="8" fill="none" stroke="#00d2ff" strokeWidth="2.200" /></svg>,
  <svg width="36" height="36" viewBox="0 0 36 36"><path d="M2 1 L18 10 L34 1 V28 L18 36 L2 28z" fill="#c4302b" /><path d="M9 12 L18 17.500 L27 12 V23.500 L18 28 L9 23.500z" fill="#dceaf2" /></svg>,
  <PacketTracerLogo w={34} h={36} />,
];

function Taskbar() {
  return (
    <div className="flex h-[70px] shrink-0 items-center bg-[linear-gradient(90deg,#dff0f4_0%,#dfeaf4_22%,#dde6f1_30%,#d7dce9_43%,#d9ebf4_54%,#daeff5_60%,#d8e2ee_65%,#d9eef4_74%,#dff0f6_78%,#e2e8f0_87%,#e2e8f1_100%)] font-['Open_Sans','Noto_Sans',sans-serif] text-[#1b1b1b]">
      <svg width="34" height="34" viewBox="0 0 34 34" className="ml-[26px] block">
        <circle cx="16" cy="15.500" r="15" fill="#8d949e" /><path d="M12 31 C5 31 4 22 11 21 C12 15 21 14 23 20 C31 19 33 31 25 31z" fill="#f1f4f7" /><circle cx="11" cy="11" r="4" fill="#7c848e" />
      </svg>
      <div className="ml-[505px] flex h-[66px] items-center">
        {apps.map((a, i) =>
          i === apps.length - 1 ? (
            <div key={i} className="ml-[4px] flex h-[58px] w-[51px] flex-col items-center rounded-md border border-[#c9dce4] bg-[#eff8fb] pt-[10px] shadow-[3px_0_0_#e5f3f7]">
              <div className="ml-[6px]">{a}</div>
              <div className="mt-[6px] ml-[4px] h-[5px] w-6 rounded-full bg-[#0078d4]" />
            </div>
          ) : (
            <div key={i} className="flex h-10 w-[66px] shrink-0 items-center justify-center">{a}</div>
          )
        )}
      </div>
      <svg width="20" height="11" viewBox="0 0 20 11" fill="none" className="ml-[180px] block"><path d="M1 10 L10 1 L19 10" stroke="#1b1b1b" strokeWidth="1.600" /></svg>
      <div className="ml-[27px] w-10 text-center text-[17.500px] leading-[23px] tracking-[-0.200px]">ENG<br />IN</div>
      <svg width="25" height="25" viewBox="0 0 25 25" fill="none" className="ml-[25px] block" stroke="#1b1b1b" strokeWidth="1.500">
        <path d="M24 10 A11.500 11.500 0 1 0 10 23.500 M1.500 8.500 H23.500 M1 16 H11 M12 1 C5 7 5 18 11 23 M12 1 C15 3 17 6 17.500 10" /><circle cx="18" cy="18" r="6" /><path d="M14 22 L22 14" />
      </svg>
      <svg width="24" height="18" viewBox="0 0 24 18" fill="none" className="ml-[11px] block" stroke="#1b1b1b" strokeWidth="1.500"><path d="M1 6 H5 L10 1.500 V16.500 L5 12 H1z M14 5 L22 13 M22 5 L14 13" /></svg>
      <svg width="24" height="16" viewBox="0 0 24 16" fill="none" className="ml-[12px] block"><rect x="1" y="1" width="20" height="14" rx="3" stroke="#1b1b1b" strokeWidth="1.600" /><path d="M3.500 3.500 H10.500 V12.500 H3.500z M22 5.500 H24 V10.500 H22z" fill="#1b1b1b" /></svg>
      <div className="ml-auto -mt-[3px] text-right text-[17.500px] leading-[24px] tracking-[-0.050px] whitespace-nowrap">09:46<br />07-10-2022</div>
      <div className="mr-[30px] ml-[17px] flex h-6 w-6 items-center justify-center rounded-full bg-[#0067c0] text-[14px] leading-none text-white">2</div>
    </div>
  );
}

/* ---------- page ---------- */

const menu: [string, string][] = [
  ["File", "w-[59px]"], ["Edit", "w-[60px]"], ["Options", "w-[88px]"], ["View", "w-[68px]"], ["Tools", "w-[70px]"], ["Extensions", "w-[112px]"], ["Help", ""],
];

export default function App() {
  return (
    <div className="flex h-[1080px] w-[1920px] flex-col overflow-hidden bg-white font-['Liberation_Sans',Arial,sans-serif] text-black">
      <svg width="0" height="0" className="absolute">
        <defs>
          <radialGradient id="bolt" cx="0.460" cy="0.500" r="0.500"><stop offset="0" stopColor="#fff000" /><stop offset="0.450" stopColor="#ff7a10" /><stop offset="0.850" stopColor="#ff1408" /><stop offset="1" stopColor="#d40000" /></radialGradient>
          <linearGradient id="steel"><stop offset="0" stopColor="#4d93ad" /><stop offset="0.450" stopColor="#e3eff3" /><stop offset="1" stopColor="#4d93ad" /></linearGradient>
          <linearGradient id="steelDiag" x2="1" y2="1"><stop offset="0" stopColor="#86b8c9" /><stop offset="1" stopColor="#4c93ac" /></linearGradient>
          <linearGradient id="win" x2="1" y2="1"><stop offset="0" stopColor="#4cc8f8" /><stop offset="1" stopColor="#0674d2" /></linearGradient>
          <linearGradient id="chat" x2="0.400" y2="1"><stop offset="0" stopColor="#9069b8" /><stop offset="1" stopColor="#5059c9" /></linearGradient>
          <linearGradient id="fold" x2="1" y2="1"><stop offset="0" stopColor="#ffd768" /><stop offset="1" stopColor="#fbb917" /></linearGradient>
          <linearGradient id="edge" x2="1" y2="0.500"><stop offset="0" stopColor="#1c9ddb" /><stop offset="0.500" stopColor="#33bfc9" /><stop offset="1" stopColor="#5fe06a" /></linearGradient>
          <linearGradient id="store" x2="0.200" y2="1"><stop offset="0" stopColor="#1062ae" /><stop offset="1" stopColor="#1c3460" /></linearGradient>
        </defs>
      </svg>

      <div className="flex h-[34px] shrink-0 items-center bg-[linear-gradient(90deg,#ebf5f5,#eef3f7_30%,#f0f3f7)] pl-[2px]">
        <PacketTracerLogo w={24} h={24} />
        <span className="ml-[6px] pt-px font-['Open_Sans','Noto_Sans',sans-serif] text-[17px] leading-none tracking-[-0.150px] text-[#111]">Cisco Packet Tracer</span>
        <div className="ml-auto flex items-center pr-[28px]">
          <div className="h-px w-[15px] bg-black" />
          <svg width="16" height="16" viewBox="0 0 16 16" fill="none" className="ml-[54px]" stroke="#000" strokeWidth="1.300"><rect x="1" y="3.500" width="11.500" height="11.500" rx="2" /><path d="M4 1 H12 Q15 1 15 4 V12" /></svg>
          <svg width="16" height="16" viewBox="0 0 16 16" className="ml-[55px]" stroke="#000" strokeWidth="1.200"><path d="M0.700 0.700 L15.300 15.300 M15.300 0.700 L0.700 15.300" /></svg>
        </div>
      </div>

      <div className="flex h-[30px] shrink-0 items-center border-b border-[#f0f0f0] pl-4 text-[15.800px] leading-none">
        {menu.map(([m, w]) => <span key={m} className={w}>{m}</span>)}
      </div>

      <div className="flex h-[65px] shrink-0 border-b-2 border-[#c0c0c0] pl-px">
        {mainTools.map((t, i) => (t ? <ToolCell key={i}>{t}</ToolCell> : <Sep key={i} />))}
        <div className="ml-auto flex pr-[3px]">
          <ToolCell>
            <Ico><path d="M13 11 C13 3 28 2 28 12 C28 19 20.500 18 20.500 27" stroke={D} strokeWidth="5.400" strokeLinecap="round" /><circle cx="20.500" cy="34.500" r="3" fill={D} /></Ico>
          </ToolCell>
        </div>
      </div>

      <div className="flex h-[66px] shrink-0 border-b-2 border-[#c0c0c0] pt-[2px] pl-px">
        {drawTools.map((t, i) =>
          t ? (
            <ToolCell key={i}>{i === 0 ? <div className="ml-[2px] flex h-[49px] w-[50px] items-center justify-center rounded-[3px] border border-[#99d1ff] bg-[#cce8ff]">{t}</div> : t}</ToolCell>
          ) : (
            <Sep key={i} />
          )
        )}
      </div>
      <div className="h-px shrink-0 bg-white" />

      <ViewBar />

      <div className="flex h-[490px] shrink-0 border border-[#828790]">
        <div className="flex w-[1892px] flex-col">
          <Topology />
          <div className="h-[25px] bg-[#f0f0f0] pt-[7px] pl-[781px]"><div className="h-[11px] w-[1084px] bg-[#868686]" /></div>
        </div>
        <div className="mb-px flex-1 bg-[#f0f0f0] pt-[29px] pl-[7px]"><div className="h-[58px] w-[11px] bg-[#868686]" /></div>
      </div>

      <TimeBar />

      <div className="flex h-[210px] shrink-0">
        <Palette />
        <CablePanel />
        <Splitter />
        <ScenarioPanel />
        <PduTable />
      </div>
      <div className="h-0.5 shrink-0 bg-[#b4bac2]" />

      <Taskbar />
    </div>
  );
}
